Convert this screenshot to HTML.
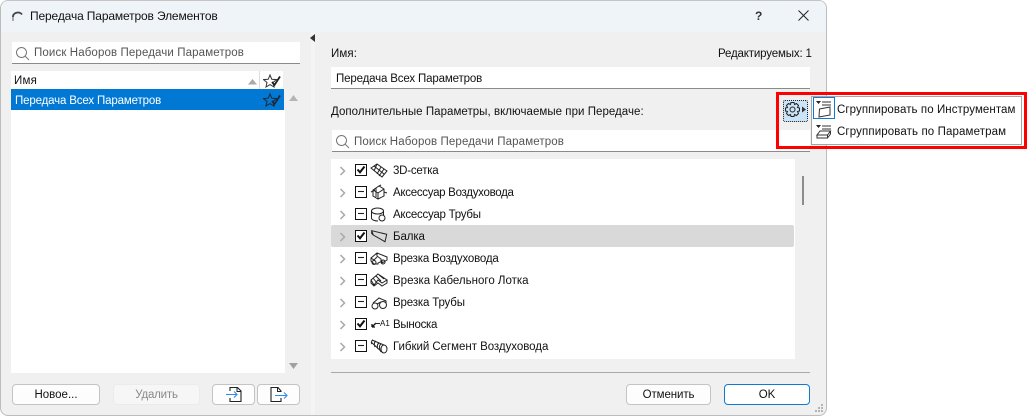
<!DOCTYPE html>
<html><head><meta charset="utf-8">
<style>
html,body{margin:0;padding:0;width:1027px;height:417px;overflow:hidden;background:#fff;font-family:"Liberation Sans",sans-serif;font-size:11.5px;color:#111}
div,svg{position:absolute;box-sizing:border-box}
.t{white-space:nowrap;line-height:14px}
.inp{background:#fff;border-bottom:1px solid #8a8a8a}
.btn{background:#fdfdfd;border:1px solid #c4c4c4;border-radius:4px;text-align:center;line-height:20px;white-space:nowrap}
.ck{left:355px;width:12px;height:12px;border:1.3px solid #111;background:#fff}
.ck svg{left:0;top:0}
svg.i{fill:none;stroke:#222;stroke-width:1}
</style></head><body>
<div style="left:0;top:0;width:827px;height:416px;background:#f0f0f0;border:1px solid #bdbdbd;border-top-color:#c4c4c4;border-radius:8px;overflow:hidden">
 <div style="left:0;top:0;width:825px;height:31px;background:#eff4f9"></div>
 <div style="left:310px;top:31px;width:4px;height:383px;background:#f4f4f4"></div>
</div>
<svg style="left:11px;top:9px" width="14" height="14"><path d="M2 12V7a5 4.500 0 0 1 9-1.500" fill="none" stroke="#444" stroke-width="1.800"/><path d="M2 12V8" stroke="#aaa" stroke-width="2"/></svg>
<div class="t" style="left:30px;top:9px;font-size:12px;letter-spacing:-.14px">Передача Параметров Элементов</div>
<div class="t" style="left:755px;top:9px;font-size:12px;font-weight:bold;color:#333">?</div>
<svg style="left:797px;top:9px" width="13" height="13"><path d="M1.500 1.500L11.500 11.500M11.500 1.500L1.500 11.500" stroke="#222" stroke-width="1"/></svg>

<div class="inp" style="left:12px;top:42px;width:288px;height:22px"></div>
<svg style="left:15px;top:46px" width="15" height="15"><circle cx="6.500" cy="6.500" r="5" fill="none" stroke="#777" stroke-width="1"/><path d="M10 10L14 14" stroke="#777" stroke-width="1"/></svg>
<div class="t" style="left:34px;top:46px;color:#555;letter-spacing:.12px">Поиск Наборов Передачи Параметров</div>

<div style="left:11px;top:71px;width:272px;height:18px;background:#fff"></div>
<div style="left:259px;top:71px;width:1px;height:18px;background:#dcdcdc"></div>
<div class="t" style="left:14px;top:74px;letter-spacing:.2px">Имя</div>
<svg style="left:247px;top:78px" width="11" height="7"><path d="M1 6.500L5.500 1L10 6.500Z" fill="#aaa"/></svg>
<svg style="left:263px;top:74px" width="19" height="15"><path d="M7 1L8.800 5.300L13.500 5.600L10 8.500L11 13L7 10.600L3 13L4 8.500L.5 5.600L5.200 5.300Z" fill="none" stroke="#333" stroke-width="1"/><path d="M9 8L11.500 11L17 2.500" fill="none" stroke="#222" stroke-width="1.800"/></svg>
<div style="left:11px;top:89px;width:273px;height:21px;background:#0078d4"></div>
<div class="t" style="left:15px;top:94px;color:#fff;letter-spacing:-.15px">Передача Всех Параметров</div>
<svg style="left:263px;top:93px" width="19" height="15"><path d="M7 1L8.800 5.300L13.500 5.600L10 8.500L11 13L7 10.600L3 13L4 8.500L.5 5.600L5.200 5.300Z" fill="none" stroke="#1b2a38" stroke-width="1"/><path d="M9 8L11.500 11L17 2.500" fill="none" stroke="#1b2a38" stroke-width="1.800"/></svg>
<div style="left:11px;top:110px;width:274px;height:263px;background:#fff"></div>
<svg style="left:288px;top:94px" width="11" height="8"><path d="M1 7L5.500 1L10 7Z" fill="#b4b4b4"/></svg>
<svg style="left:288px;top:362px" width="11" height="8"><path d="M1 1L5.500 7L10 1Z" fill="#a0a0a0"/></svg>
<svg style="left:310px;top:34px" width="6" height="9"><path d="M5 0V8L0 4Z" fill="#333"/></svg>

<div class="btn" style="left:12px;top:384px;width:88px;height:21px">Новое...</div>
<div class="btn" style="left:113px;top:384px;width:87px;height:21px;background:#f6f6f6;border-color:#ebebeb;color:#8a8a8a;letter-spacing:-.2px">Удалить</div>
<div class="btn" style="left:212px;top:384px;width:43px;height:21px"></div>
<div class="btn" style="left:257px;top:384px;width:43px;height:21px"></div>
<svg style="left:225px;top:386px" width="20" height="17"><path d="M5 5V1.500H12.500L16 5V15.500H5V12" fill="none" stroke="#222" stroke-width="1.100"/><path d="M12 1.500V5.500H16" fill="none" stroke="#222" stroke-width="1"/><path d="M1 8.500H12M9 5.500L12 8.500L9 11.500" fill="none" stroke="#2f8bf0" stroke-width="1.100"/></svg>
<svg style="left:269px;top:386px" width="20" height="17"><path d="M12 6V5L9 1.500H2V15.500H12V12" fill="none" stroke="#222" stroke-width="1.100"/><path d="M8.500 1.500V5.500H12" fill="none" stroke="#222" stroke-width="1"/><path d="M6 9.500H18M15 6.500L18 9.500L15 12.500" fill="none" stroke="#2f8bf0" stroke-width="1.100"/></svg>

<div class="t" style="left:331px;top:47px;letter-spacing:.1px">Имя:</div>
<div class="t" style="left:718px;top:47px;letter-spacing:-.155px">Редактируемых: 1</div>
<div class="inp" style="left:331px;top:67px;width:479px;height:22px"></div>
<div class="t" style="left:336px;top:72px;letter-spacing:-.15px">Передача Всех Параметров</div>
<div class="t" style="left:331px;top:105px;letter-spacing:.04px">Дополнительные Параметры, включаемые при Передаче:</div>

<div class="inp" style="left:332px;top:130px;width:478px;height:22px"></div>
<svg style="left:335px;top:134px" width="15" height="15"><circle cx="6.500" cy="6.500" r="5" fill="none" stroke="#777" stroke-width="1"/><path d="M10 10L14 14" stroke="#777" stroke-width="1"/></svg>
<div class="t" style="left:354px;top:135px;color:#555;letter-spacing:.12px">Поиск Наборов Передачи Параметров</div>

<div style="left:331px;top:159px;width:464px;height:200px;background:#fff"></div>
<div style="left:331px;top:225px;width:463px;height:22px;background:#d9d9d9;border-radius:2px"></div>
<div style="left:802px;top:176px;width:2px;height:29px;background:#8c8c8c"></div>
<div style="left:331px;top:372px;width:479px;height:1px;background:#a9a9a9"></div>

<svg style="left:339px;top:166px" width="10" height="190"><g fill="none" stroke="#a8a8a8" stroke-width="1.500"><path d="M1.500 1L5.500 5L1.500 9"/><path d="M1.500 23L5.500 27L1.500 31"/><path d="M1.500 45L5.500 49L1.500 53"/><path d="M1.500 67L5.500 71L1.500 75"/><path d="M1.500 89L5.500 93L1.500 97"/><path d="M1.500 111L5.500 115L1.500 119"/><path d="M1.500 133L5.500 137L1.500 141"/><path d="M1.500 155L5.500 159L1.500 163"/><path d="M1.500 177L5.500 181L1.500 185"/></g></svg>

<div class="ck" style="top:164px"><svg width="10" height="10"><path d="M1.500 4.500L4 7.300L8.500 1.500" fill="none" stroke="#111" stroke-width="2"/></svg></div>
<div class="ck" style="top:186px"><svg width="10" height="10"><path d="M2 4.500H8" stroke="#222" stroke-width="1.100"/></svg></div>
<div class="ck" style="top:208px"><svg width="10" height="10"><path d="M2 4.500H8" stroke="#222" stroke-width="1.100"/></svg></div>
<div class="ck" style="top:230px"><svg width="10" height="10"><path d="M1.500 4.500L4 7.300L8.500 1.500" fill="none" stroke="#111" stroke-width="2"/></svg></div>
<div class="ck" style="top:252px"><svg width="10" height="10"><path d="M2 4.500H8" stroke="#222" stroke-width="1.100"/></svg></div>
<div class="ck" style="top:274px"><svg width="10" height="10"><path d="M2 4.500H8" stroke="#222" stroke-width="1.100"/></svg></div>
<div class="ck" style="top:296px"><svg width="10" height="10"><path d="M2 4.500H8" stroke="#222" stroke-width="1.100"/></svg></div>
<div class="ck" style="top:318px"><svg width="10" height="10"><path d="M1.500 4.500L4 7.300L8.500 1.500" fill="none" stroke="#111" stroke-width="2"/></svg></div>
<div class="ck" style="top:340px"><svg width="10" height="10"><path d="M2 4.500H8" stroke="#222" stroke-width="1.100"/></svg></div>

<svg class="i" style="left:370px;top:163px" width="18" height="15"><path d="M1 5L7 1L17 8L12 14ZM4 3L14 11M7 1L4 8M11 4L7 11M14 6L9 13"/></svg>
<svg class="i" style="left:370px;top:184px" width="18" height="16"><path d="M3 6L9 2L14 5V12L8 15L3 12ZM3 6L8 9V15M8 9L14 5M1 8L5 6M11 1L9 2M14 8L17 9M6 4V13"/></svg>
<svg class="i" style="left:370px;top:207px" width="18" height="16"><ellipse cx="7.500" cy="4" rx="6" ry="3"/><path d="M1.500 4V11C1.500 13 5 14 8 14M13.500 4V8"/><circle cx="12" cy="11" r="3"/></svg>
<svg class="i" style="left:370px;top:229px" width="18" height="15"><path d="M1.700 1.700L16.700 5.300L15 12.700L3.300 6ZM1.700 1.700V4.500L3.300 6"/></svg>
<svg class="i" style="left:370px;top:251px" width="18" height="15"><path d="M1 7L7 2L17 6V9L12 12V10L8 12V13H4L1 10ZM7 2V5L11 8V11M1 7L4 9L7 6"/><circle cx="4" cy="11.500" r="2"/><circle cx="13" cy="11" r="2"/></svg>
<svg class="i" style="left:370px;top:273px" width="18" height="15"><path d="M1 7L8 1L17 7L12 10L8 7L4 12ZM3 5L7 10M6 3L11 8M9 2L14 6M1 7V10L4 13L8 10L12 13L17 10V7"/></svg>
<svg class="i" style="left:370px;top:295px" width="18" height="15"><ellipse cx="13" cy="10" rx="3.500" ry="3.500"/><ellipse cx="5" cy="11" rx="3" ry="3"/><path d="M3 8L9 3L16 6V8M7 9L11 7"/></svg>
<svg class="i" style="left:370px;top:339px" width="18" height="15"><ellipse cx="14" cy="10" rx="3" ry="4"/><path d="M2 1L14 6M1 3L13 14M3 1C1 2 1 4 2 5M6 2C4 3 4 6 5 8M9 4C7 5 7 8 8 10M11 5C9 6 9 10 11 13"/></svg>
<svg style="left:371px;top:320px" width="7" height="9"><path d="M1 7L5 3M1 7V4M1 7H4" stroke="#111" stroke-width="1.300" fill="none"/></svg>
<div style="left:375px;top:323px;width:5px;height:1px;background:#222"></div>
<div class="t" style="left:380px;top:317px;font-size:8px;letter-spacing:0;color:#111">A1</div>

<div class="t" style="left:393px;top:164px;letter-spacing:-.22px">3D-сетка</div>
<div class="t" style="left:393px;top:186px;letter-spacing:-.29px">Аксессуар Воздуховода</div>
<div class="t" style="left:393px;top:208px;letter-spacing:-.25px">Аксессуар Трубы</div>
<div class="t" style="left:393px;top:230px;letter-spacing:-.1px">Балка</div>
<div class="t" style="left:393px;top:252px;letter-spacing:-.19px">Врезка Воздуховода</div>
<div class="t" style="left:393px;top:274px;letter-spacing:0">Врезка Кабельного Лотка</div>
<div class="t" style="left:393px;top:296px;letter-spacing:-.16px">Врезка Трубы</div>
<div class="t" style="left:393px;top:318px;letter-spacing:-.28px">Выноска</div>
<div class="t" style="left:393px;top:340px;letter-spacing:-.04px">Гибкий Сегмент Воздуховода</div>

<div class="btn" style="left:626px;top:384px;width:85px;height:21px;letter-spacing:-.1px">Отменить</div>
<div class="btn" style="left:724px;top:384px;width:86px;height:21px;border-color:#0f7ad6;background:#fff">OK</div>
<svg style="left:815px;top:404px" width="10" height="10"><g fill="#b4b4b4"><rect x="6" y="0" width="2" height="2"/><rect x="3" y="3" width="2" height="2"/><rect x="6" y="3" width="2" height="2"/><rect x="0" y="6" width="2" height="2"/><rect x="3" y="6" width="2" height="2"/><rect x="6" y="6" width="2" height="2"/></g></svg>

<div style="left:783px;top:100px;width:25px;height:22px;background:#cce4f7;border:1px dotted #222;border-radius:2px"></div>
<svg style="left:785px;top:102px" width="23" height="17"><path d="M6 .5H9L9.500 2.500L11.500 1.500L13.500 3.500L12.500 5.500L14.500 6V9L12.500 9.500L13.500 11.500L11.500 13.500L9.500 12.500L9 14.500H6L5.500 12.500L3.500 13.500L1.500 11.500L2.500 9.500L.5 9V6L2.500 5.500L1.500 3.500L3.500 1.500L5.500 2.500Z" fill="none" stroke="#222" stroke-width="1"/><circle cx="7.500" cy="7.500" r="2.500" fill="none" stroke="#222" stroke-width="1"/><path d="M17 4.500L21 7.500L17 10.500Z" fill="#333"/></svg>
<div style="left:776px;top:92px;width:251px;height:57px;border:3px solid #f00"></div>
<div style="left:811px;top:96px;width:211px;height:49px;background:#fff;border:1px solid #a5a5a5"></div>
<div style="left:813px;top:97px;width:22px;height:22px;background:#fff;border:1px solid #0f7ad6"></div>
<svg style="left:815px;top:99px" width="20" height="20"><path d="M1 2H6L3.500 5Z" fill="#222"/><path d="M7 3H16M7 6H16" stroke="#333" stroke-width="1"/><path d="M4.500 10L15 8V16L4 18Z" fill="none" stroke="#333" stroke-width="1"/></svg>
<svg style="left:815px;top:123px" width="20" height="20"><path d="M1 2H6L3.500 5Z" fill="#222"/><path d="M7 3H16M7 6H16" stroke="#333" stroke-width="1"/><path d="M5 8H15.500L12.500 12H2ZM2 12V15H12.500L15.500 11V8M12.500 12V15" fill="none" stroke="#333" stroke-width="1"/></svg>
<div class="t" style="left:837px;top:103px;letter-spacing:.08px">Сгруппировать по Инструментам</div>
<div class="t" style="left:837px;top:125px;letter-spacing:.12px">Сгруппировать по Параметрам</div>
</body></html>
